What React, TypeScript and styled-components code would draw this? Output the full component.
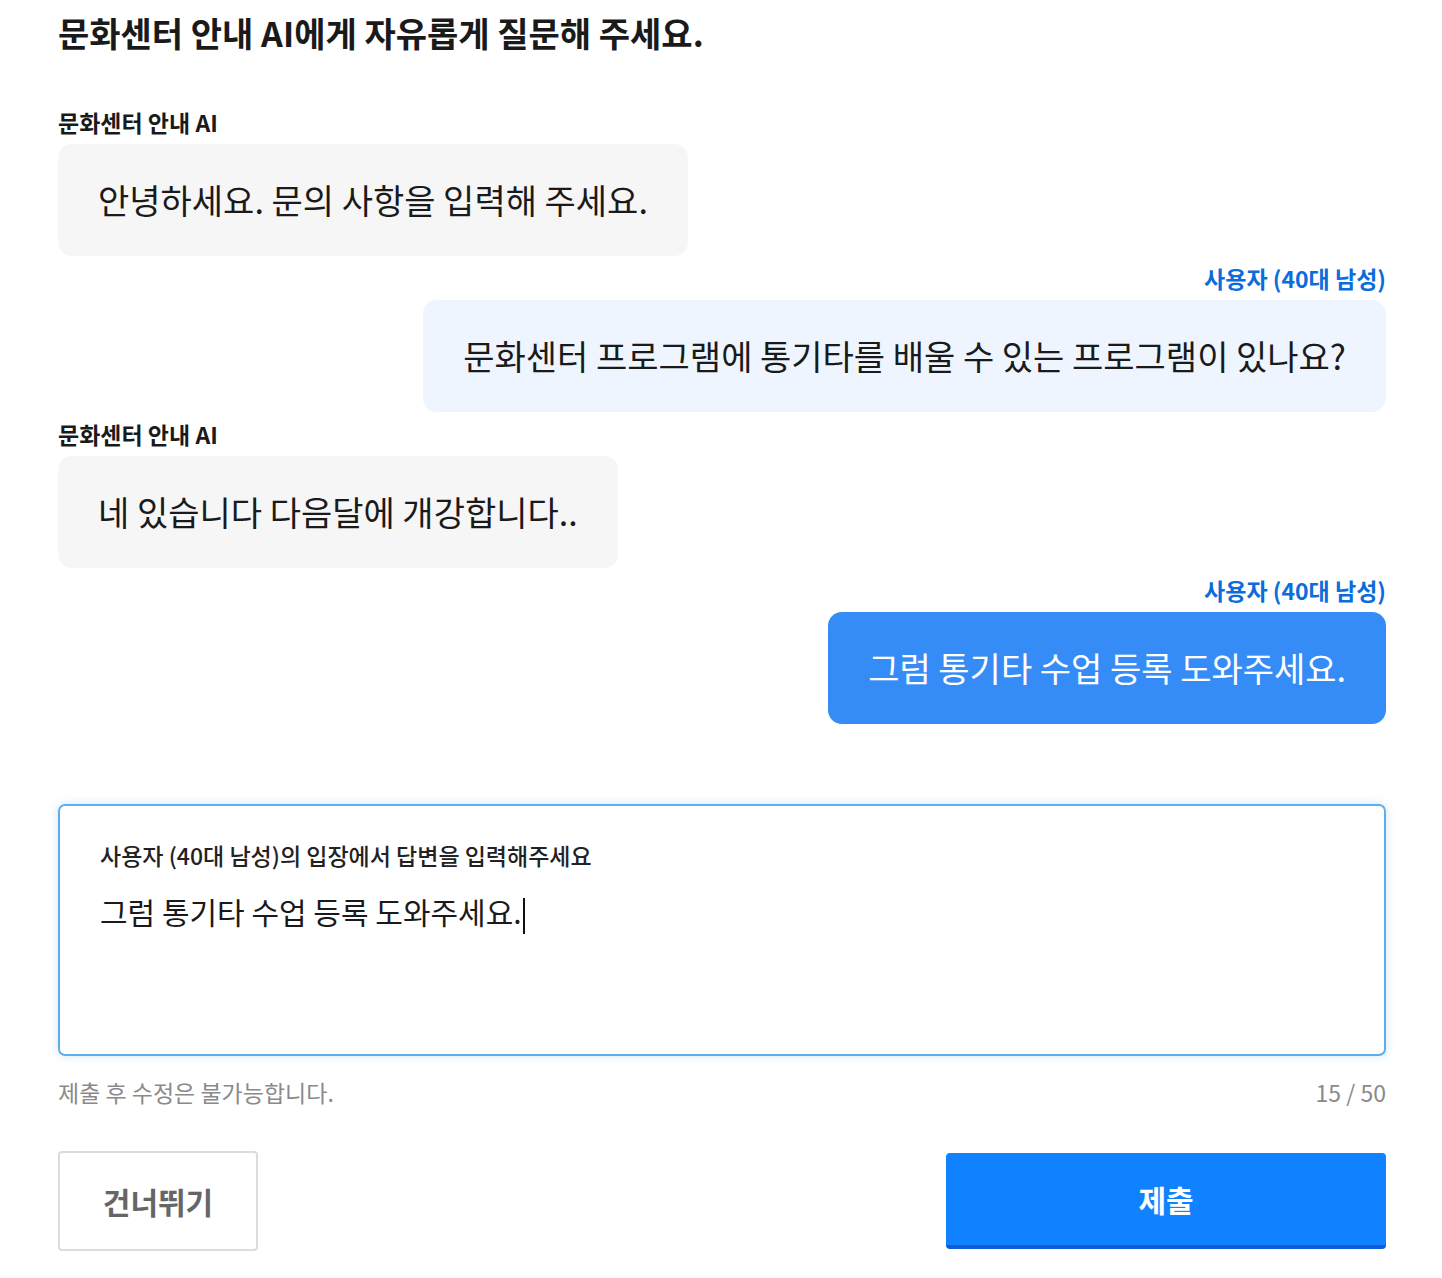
import React from 'react';
import styled, {createGlobalStyle} from 'styled-components';

const GlobalStyle = createGlobalStyle`
  html, body {
    margin: 0;
    padding: 0;
    background: #ffffff;
  }
  body {
    font-family: 'Noto Sans CJK KR', 'Noto Sans', sans-serif;
    color: #1a1a1a;
  }
  * {
    box-sizing: border-box;
  }
`;

type Sender = 'ai' | 'user';

interface Message {
  sender: Sender;
  text: string;
  active?: boolean;
}

const messages: Message[] = [
  {sender: 'ai', text: '안녕하세요. 문의 사항을 입력해 주세요.'},
  {sender: 'user', text: '문화센터 프로그램에 통기타를 배울 수 있는 프로그램이 있나요?'},
  {sender: 'ai', text: '네 있습니다 다음달에 개강합니다..'},
  {sender: 'user', text: '그럼 통기타 수업 등록 도와주세요.', active: true},
];

const senderName: Record<Sender, string> = {
  ai: '문화센터 안내 AI',
  user: '사용자 (40대 남성)',
};

const Page = styled.main`
  width: 1328px;
  margin-left: 58px;
  padding: 10px 0 28px;
`;

const Title = styled.h1`
  margin: 0;
  font-size: 34px;
  line-height: 46px;
  font-weight: 700;
  color: #1a1a1a;
`;

const ChatList = styled.section`
  display: flex;
  flex-direction: column;
  gap: 8px;
  margin-top: 52px;
`;

const Group = styled.div<{$sender: Sender}>`
  display: flex;
  flex-direction: column;
  align-items: ${p => (p.$sender === 'user' ? 'flex-end' : 'flex-start')};
`;

const Name = styled.span<{$sender: Sender}>`
  font-size: 23px;
  line-height: 28px;
  font-weight: 700;
  margin-bottom: 8px;
  color: ${p => (p.$sender === 'user' ? '#0b6ddc' : '#1a1a1a')};
`;

const Bubble = styled.div<{$sender: Sender; $active?: boolean}>`
  padding: 38px 40px;
  border-radius: 14px;
  font-size: 34px;
  line-height: 36px;
  font-weight: 400;
  background: ${p =>
    p.$active ? '#368cf6' : p.$sender === 'user' ? '#eef5ff' : '#f6f6f6'};
  color: ${p => (p.$active ? '#ffffff' : '#1a1a1a')};
`;

const AnswerBox = styled.div`
  margin-top: 80px;
  height: 252px;
  border: 2px solid #5eaeeb;
  border-radius: 7px;
  box-shadow: 0 0 10px rgba(94, 174, 235, 0.3);
  padding: 35px 40px;
`;

const AnswerLabel = styled.div`
  font-size: 23px;
  line-height: 28px;
  font-weight: 500;
  color: #222222;
`;

const AnswerText = styled.div`
  margin-top: 22px;
  font-size: 30px;
  line-height: 40px;
  color: #1a1a1a;
`;

const Caret = styled.span`
  display: inline-block;
  width: 2px;
  height: 36px;
  margin-left: 1px;
  vertical-align: middle;
  background: #111111;
`;

const HelpRow = styled.div`
  display: flex;
  justify-content: space-between;
  margin-top: 22px;
  font-size: 23px;
  line-height: 28px;
  color: #8a8a8a;
`;

const Actions = styled.div`
  display: flex;
  justify-content: space-between;
  align-items: center;
  margin-top: 45px;
`;

const SkipButton = styled.button`
  width: 200px;
  height: 100px;
  background: #ffffff;
  border: 2px solid #dcdcdc;
  border-radius: 4px;
  font-family: inherit;
  font-size: 30px;
  font-weight: 700;
  color: #666666;
  cursor: pointer;
`;

const SubmitButton = styled.button`
  width: 440px;
  height: 96px;
  background: #1182ff;
  border: none;
  border-bottom: 4px solid #0f5bd8;
  border-radius: 4px;
  font-family: inherit;
  font-size: 30px;
  font-weight: 700;
  color: #ffffff;
  cursor: pointer;
`;

const App = () => {
  const answer = '그럼 통기타 수업 등록 도와주세요.';
  const count = answer.replace(/\s/g, '').length;

  return (
    <Page>
      <GlobalStyle />
      <Title>문화센터 안내 AI에게 자유롭게 질문해 주세요.</Title>

      <ChatList>
        {messages.map((message, index) => (
          <Group key={index} $sender={message.sender}>
            <Name $sender={message.sender}>{senderName[message.sender]}</Name>
            <Bubble $sender={message.sender} $active={message.active}>
              {message.text}
            </Bubble>
          </Group>
        ))}
      </ChatList>

      <AnswerBox>
        <AnswerLabel>사용자 (40대 남성)의 입장에서 답변을 입력해주세요</AnswerLabel>
        <AnswerText>
          {answer}
          <Caret />
        </AnswerText>
      </AnswerBox>

      <HelpRow>
        <span>제출 후 수정은 불가능합니다.</span>
        <span>{count} / 50</span>
      </HelpRow>

      <Actions>
        <SkipButton>건너뛰기</SkipButton>
        <SubmitButton>제출</SubmitButton>
      </Actions>
    </Page>
  );
};

export default App;
